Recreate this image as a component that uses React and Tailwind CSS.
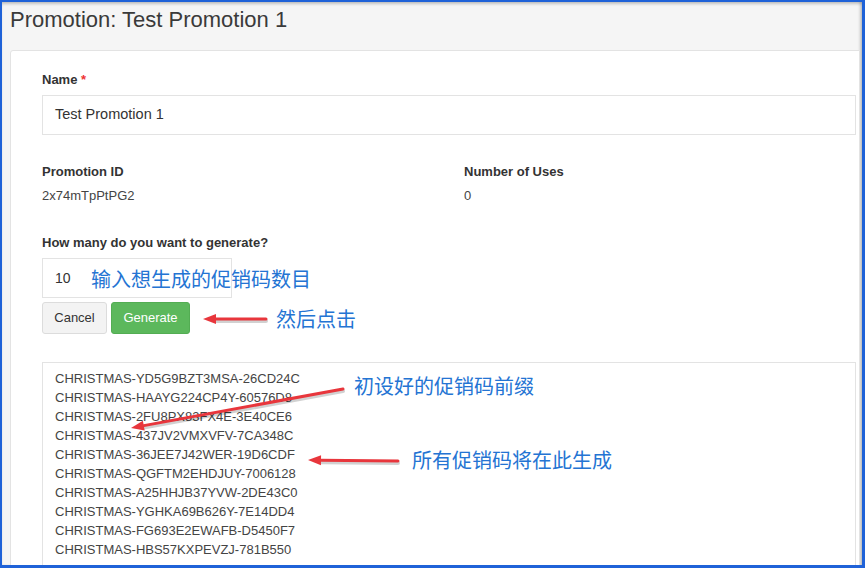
import React from "react";

const codes = [
  "CHRISTMAS-YD5G9BZT3MSA-26CD24C",
  "CHRISTMAS-HAAYG224CP4Y-60576D8",
  "CHRISTMAS-2FU8PX83FX4E-3E40CE6",
  "CHRISTMAS-437JV2VMXVFV-7CA348C",
  "CHRISTMAS-36JEE7J42WER-19D6CDF",
  "CHRISTMAS-QGFTM2EHDJUY-7006128",
  "CHRISTMAS-A25HHJB37YVW-2DE43C0",
  "CHRISTMAS-YGHKA69B626Y-7E14DD4",
  "CHRISTMAS-FG693E2EWAFB-D5450F7",
  "CHRISTMAS-HBS57KXPEVZJ-781B550",
];

// red arrows drawn on top of the screenshot
const Arrow = ({ x1, y1, x2, y2 }) => {
  const ang = Math.atan2(y2 - y1, x2 - x1);
  const len = 13;
  const w = 5;
  const bx = x2 - len * Math.cos(ang);
  const by = y2 - len * Math.sin(ang);
  const px = -Math.sin(ang) * w;
  const py = Math.cos(ang) * w;
  return (
    <g>
      <line x1={x1} y1={y1 + 2} x2={bx} y2={by + 2} stroke="rgba(0,0,0,0.18)" strokeWidth="4" strokeLinecap="round" />
      <line x1={x1} y1={y1} x2={bx} y2={by} stroke="#e8363c" strokeWidth="3" strokeLinecap="round" />
      <polygon points={`${x2},${y2} ${bx + px},${by + py} ${bx - px},${by - py}`} fill="#e8363c" />
    </g>
  );
};

const Note = ({ className, children }) => (
  <div
    className={`absolute text-[20px] leading-[24px] text-[#2474d3] whitespace-nowrap ${className}`}
    style={{ fontFamily: '"Noto Sans CJK SC", sans-serif' }}
  >
    {children}
  </div>
);

export default function App() {
  return (
    <div
      className="relative h-[568px] w-[865px] overflow-hidden border-t-2 border-l-2 border-r-[3px] border-b-[3px] border-[#1f62d8] bg-[#f5f5f5] text-[#333]"
      style={{ fontFamily: '"Liberation Sans", Arial, sans-serif' }}
    >
      <div className="h-full shadow-[inset_0_3px_3px_-1px_rgba(0,0,0,0.2),inset_-3px_0_3px_-1px_rgba(0,0,0,0.2)]">
        <h1 className="pl-[8px] pt-[4px] text-[22px] leading-[28px] font-normal text-[#3a3a3a]">
          Promotion: Test Promotion 1
        </h1>
        <div className="ml-[8px] mt-[16px] w-[850px] h-[600px] rounded-tl-[3px] border border-[#e3e3e3] bg-white pl-[31px] pr-[3px] pt-[20px]">
          <div className="text-[13px] leading-[18px] font-bold">
            Name <span className="text-[#e33]">*</span>
          </div>
          <div className="mt-[6px] flex h-[40px] w-[814px] items-center border border-[#e3e3e3] pl-[12px] text-[14.5px]">
            Test Promotion 1
          </div>

          <div className="mt-[28px] grid w-[814px] grid-cols-2 gap-x-[30px] text-[13px] leading-[18px]">
            <div>
              <div className="font-bold">Promotion ID</div>
              <div className="mt-[6px] text-[#444]">2x74mTpPtPG2</div>
            </div>
            <div>
              <div className="font-bold">Number of Uses</div>
              <div className="mt-[6px] text-[#444]">0</div>
            </div>
          </div>

          <div className="mt-[29px] text-[13px] leading-[18px] font-bold">
            How many do you want to generate?
          </div>
          <div className="mt-[6px] flex h-[40px] w-[190px] items-center border border-[#e3e3e3] pl-[12px] text-[14px]">
            10
          </div>
          <div className="mt-[4px] flex gap-[4px] text-[13px]">
            <button className="h-[32px] w-[65px] rounded-[3px] border border-[#dcdcdc] bg-[#f3f3f3] text-[#333]">
              Cancel
            </button>
            <button className="h-[32px] w-[79px] rounded-[3px] border border-[#53ad53] bg-[#5cb85c] text-white">
              Generate
            </button>
          </div>

          <div className="mt-[28px] h-[220px] w-[814px] border border-[#e3e3e3] pl-[12px] pt-[6px] text-[13px] leading-[19px] text-[#444]">
            {codes.map((c) => (
              <div key={c}>{c}</div>
            ))}
          </div>
        </div>
      </div>

      <Note className="left-[89px] top-[265px]">输入想生成的促销码数目</Note>
      <Note className="left-[274px] top-[305px]">然后点击</Note>
      <Note className="left-[352px] top-[372px]">初设好的促销码前缀</Note>
      <Note className="left-[410px] top-[446px]">所有促销码将在此生成</Note>

      <svg className="absolute left-[-2px] top-[-2px]" width="865" height="568">
        <Arrow x1={266} y1={319} x2={203} y2={319} />
        <Arrow x1={343} y1={389} x2={131} y2={428} />
        <Arrow x1={398} y1={461} x2={308} y2={460} />
      </svg>
    </div>
  );
}
